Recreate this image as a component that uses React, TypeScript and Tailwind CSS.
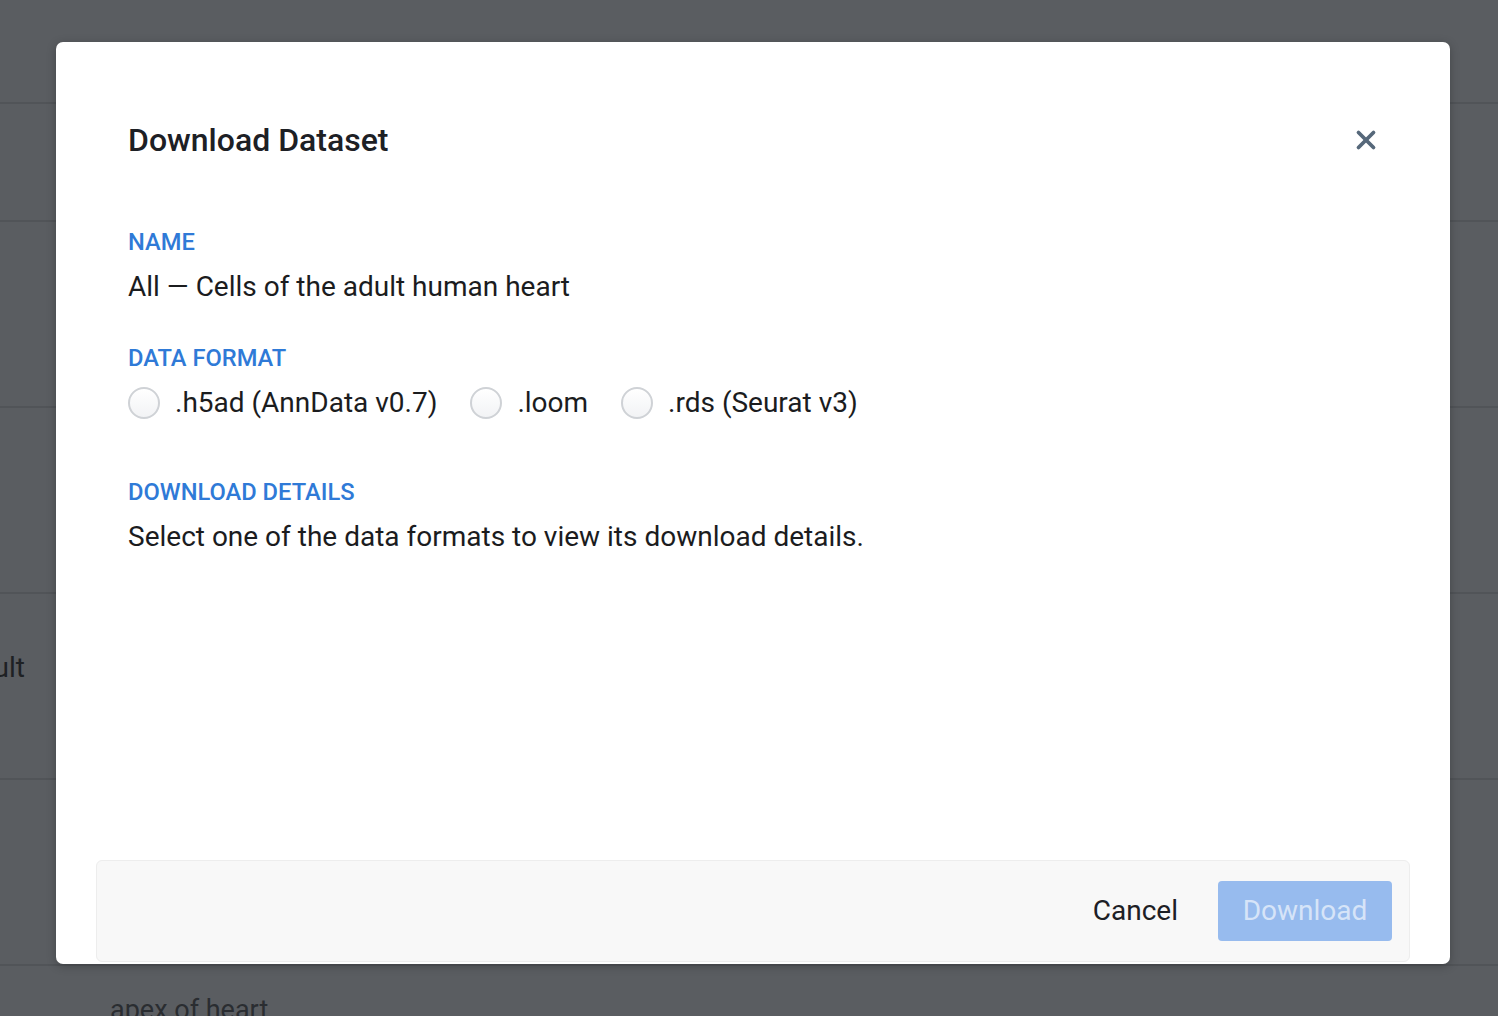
import { X } from "lucide-react";

const rows = [
  { height: "h-[104px]", text: false },
  { height: "h-[118px]", text: false },
  { height: "h-[186px]", text: false },
  { height: "h-[186px]", text: false },
  { height: "h-[186px]", text: true },
  { height: "h-[186px]", text: false },
];

export default function App() {
  return (
    <div className="relative h-[1016px] w-full overflow-hidden bg-[#5a5d61] font-['Roboto',sans-serif]">
      <div className="flex flex-col">
        {rows.map((row, index) => (
          <div className={`flex ${row.height} items-start border-b-2 border-[#515458]`} key={index}>
            {row.text ? (
              <div className="mt-[58px] flex w-[25px] justify-end overflow-hidden whitespace-nowrap text-[28px] leading-[32px] text-[#1e2124]">
                adult
              </div>
            ) : null}
          </div>
        ))}
        <div className="pl-[110px] pt-[28px] text-[27px] leading-[32px] text-[#2a2d31]">apex of heart</div>
      </div>

      <div className="absolute left-[56px] top-[42px] flex h-[922px] w-[1394px] flex-col rounded-[7px] bg-white shadow-[0_2px_10px_rgba(0,0,0,0.25)]">
        <header className="flex items-center justify-between pl-[72px] pr-[68px] pt-[77px]">
          <h1 className="text-[32px] font-medium leading-[42px] text-[#1d2025]">Download Dataset</h1>
          <button className="flex h-8 w-8 items-center justify-center text-[#56687a]" type="button">
            <X size={30} strokeWidth={3} />
          </button>
        </header>

        <section className="flex flex-1 flex-col px-[72px] pt-[67px]">
          <Label>NAME</Label>
          <p className="mt-[15px] text-[28px] leading-[32px] text-[#1b1c1e]">All — Cells of the adult human heart</p>

          <Label className="mt-[41px]">DATA FORMAT</Label>
          <div className="mt-[15px] flex items-center gap-[33px]">
            <Radio label=".h5ad (AnnData v0.7)" />
            <Radio label=".loom" />
            <Radio label=".rds (Seurat v3)" />
          </div>

          <Label className="mt-[59px]">DOWNLOAD DETAILS</Label>
          <p className="mt-[15px] text-[28px] leading-[32px] text-[#1b1c1e]">
            Select one of the data formats to view its download details.
          </p>
        </section>

        <footer className="mx-[40px] mb-[2px] flex h-[102px] items-center justify-end gap-[40px] rounded-[6px] border border-[#ededed] bg-[#f8f8f8] pr-[17px]">
          <button className="text-[28px] text-[#1d2025]" type="button">
            Cancel
          </button>
          <button
            className="h-[60px] w-[174px] rounded-[4px] bg-[#97bbee] text-[28px] text-[#d6e4f8]"
            disabled
            type="button"
          >
            Download
          </button>
        </footer>
      </div>
    </div>
  );
}

function Label({ children, className = "" }: { readonly children: string; readonly className?: string }) {
  return (
    <h2 className={`text-[23.7px] font-medium leading-[28px] text-[#2f7ad7] ${className}`}>{children}</h2>
  );
}

function Radio({ label }: { readonly label: string }) {
  return (
    <label className="flex items-center gap-[15px] text-[28px] leading-[32px] text-[#1b1c1e]">
      <span className="h-[32px] w-[32px] rounded-full border-2 border-[#cfd2d6] bg-gradient-to-b from-white to-[#f2f3f5]" />
      {label}
    </label>
  );
}
